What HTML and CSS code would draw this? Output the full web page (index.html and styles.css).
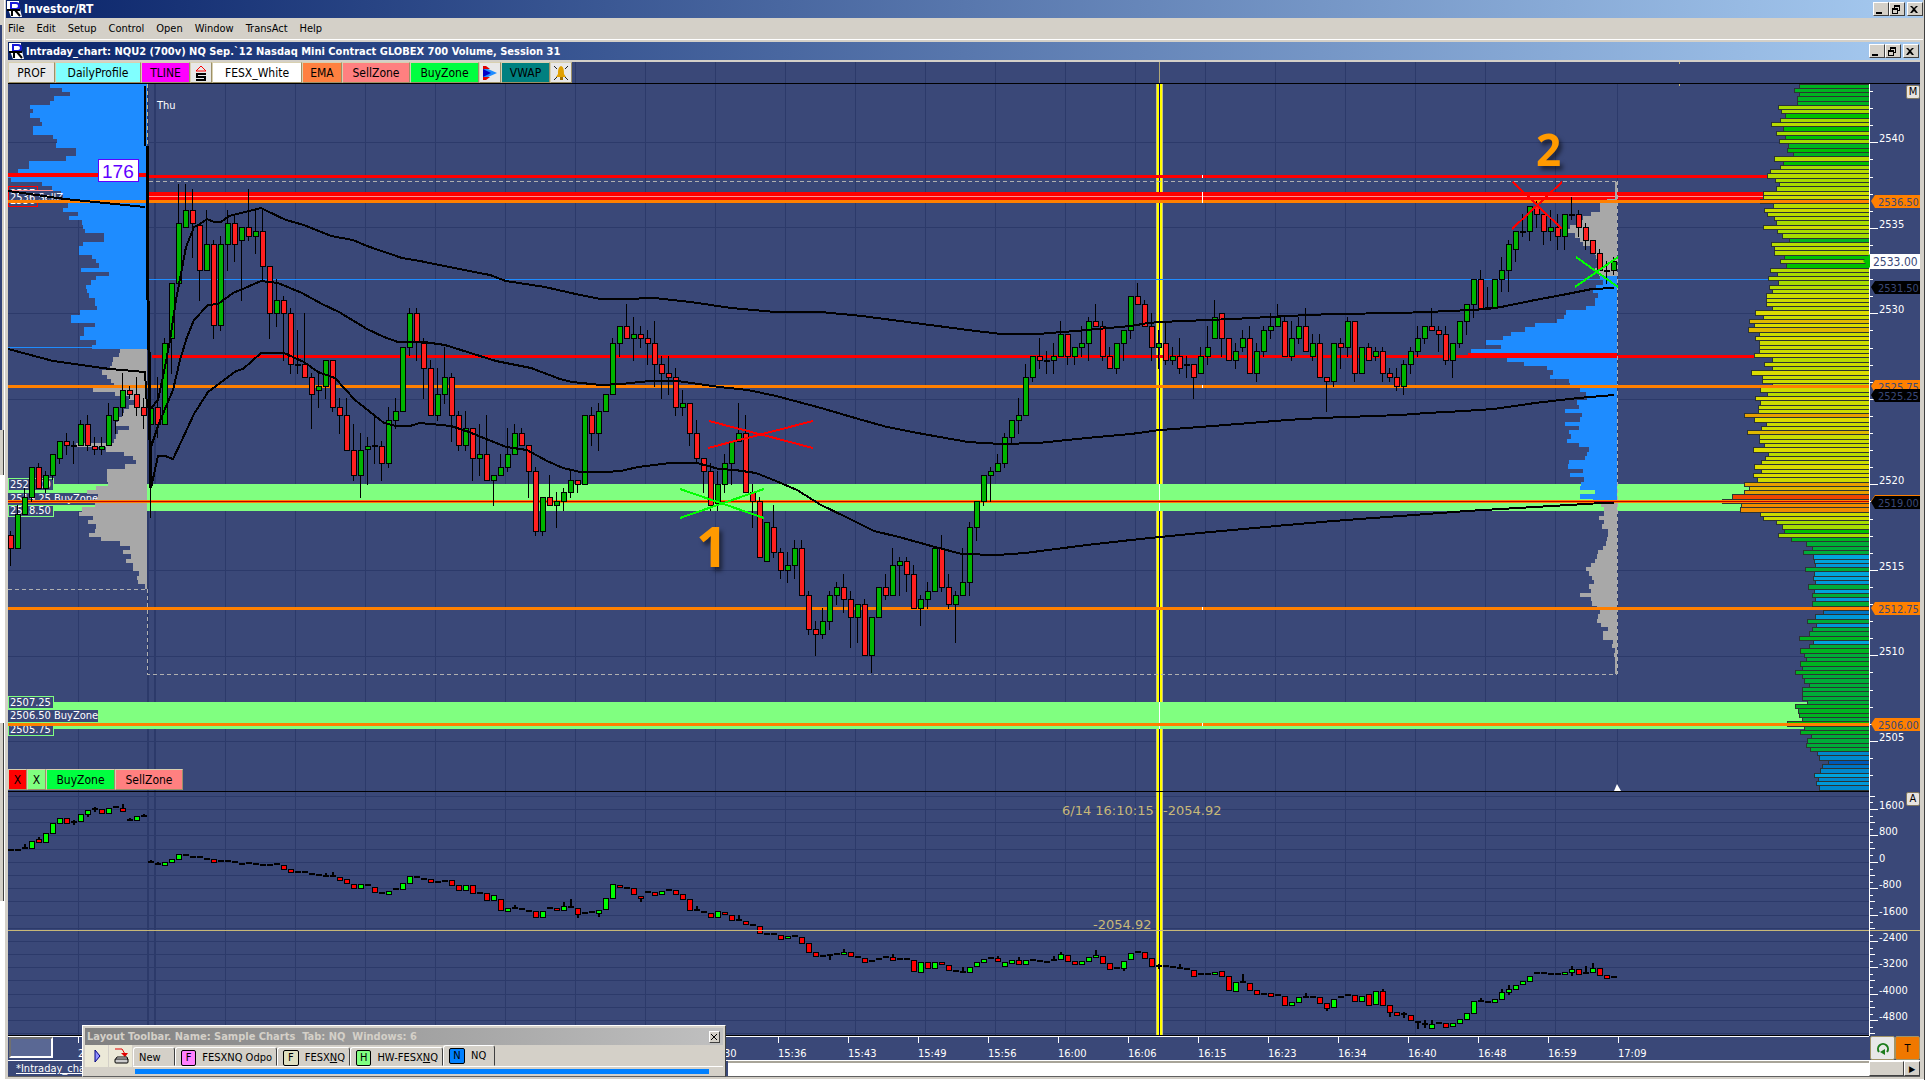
FILE: index.html
```html
<!DOCTYPE html>
<html lang="en">
<head>
    <meta charset="UTF-8">
    <meta name="viewport" content="width=device-width, initial-scale=1.0">
    <title>Investor/RT</title>
    <link rel="stylesheet" href="styles.css">
</head>
<body>
    <div class="desktop">
        <div class="behind">
            <div class="behind-top"></div>
            <div class="behind-chart"></div>
            <div class="behind-bar"></div>
            <div class="behind-blank"></div>
            <div class="behind-bar behind-bar-low"></div>
        </div>

        <div class="app">
            <header class="titlebar">
                <svg class="logo" viewBox="0 0 16 16"><rect x="1" width="12" height="9" fill="#fff"/><path d="M2 8h12l2 8H5z" fill="#fff"/><path d="M4 2h6q3 0 3 3t-3 3H6M5 2v7" fill="none" stroke="#1818d8" stroke-width="2"/><path d="M1 9h13M6 9v6M9 9l5 6" fill="none" stroke="#000" stroke-width="2"/></svg>
                <h1>Investor/RT</h1>
                <div class="win-buttons">
                    <button type="button" aria-label="Minimize"><svg viewBox="0 0 12 11"><path d="M2 8h6v2H2z"/></svg></button>
                    <button type="button" aria-label="Restore"><svg viewBox="0 0 12 11"><path d="M4 1h6v6H8V6h1V3H5v1H4zM2 4h6v6H2zM3 6v3h4V6z" fill-rule="evenodd"/></svg></button>
                    <button type="button" aria-label="Close" class="close"><svg viewBox="0 0 12 11"><path d="M2 2h2l2 2 2-2h2L7 5l3 4H8L6 7 4 9H2l3-4z"/></svg></button>
                </div>
            </header>

            <nav class="menubar">
                <button type="button">File</button>
                <button type="button">Edit</button>
                <button type="button">Setup</button>
                <button type="button">Control</button>
                <button type="button">Open</button>
                <button type="button">Window</button>
                <button type="button">TransAct</button>
                <button type="button">Help</button>
            </nav>

            <main class="mdi">
                <div class="titlebar titlebar-inner">
                    <svg class="logo" viewBox="0 0 16 16"><rect x="1" width="12" height="9" fill="#fff"/><path d="M2 8h12l2 8H5z" fill="#fff"/><path d="M4 2h6q3 0 3 3t-3 3H6M5 2v7" fill="none" stroke="#1818d8" stroke-width="2"/><path d="M1 9h13M6 9v6M9 9l5 6" fill="none" stroke="#000" stroke-width="2"/></svg>
                    <h2>Intraday_chart: NQU2 (700v) NQ Sep.`12 Nasdaq Mini Contract GLOBEX 700 Volume, Session 31</h2>
                    <div class="win-buttons">
                        <button type="button" aria-label="Minimize chart"><svg viewBox="0 0 12 11"><path d="M2 8h6v2H2z"/></svg></button>
                        <button type="button" aria-label="Restore chart"><svg viewBox="0 0 12 11"><path d="M4 1h6v6H8V6h1V3H5v1H4zM2 4h6v6H2zM3 6v3h4V6z" fill-rule="evenodd"/></svg></button>
                        <button type="button" aria-label="Close chart" class="close"><svg viewBox="0 0 12 11"><path d="M2 2h2l2 2 2-2h2L7 5l3 4H8L6 7 4 9H2l3-4z"/></svg></button>
                    </div>
                </div>

                <div class="chart-wrap">
                    <svg id="chart" viewBox="8 62 1912 998"></svg>

                    <div class="tools">
                        <button type="button" class="tool w-prof">PROF</button>
                        <button type="button" class="tool w-daily cyan">DailyProfile</button>
                        <button type="button" class="tool w-tline magenta">TLINE</button>
                        <button type="button" class="tool w-icon" aria-label="Session"><svg viewBox="0 0 16 18"><path d="M3 7h10L8 2z" fill="none" stroke="#f00"/><path d="M13 10H4v3h8v3H3" fill="none" stroke="#000" stroke-width="2"/></svg></button>
                        <button type="button" class="tool w-fesx white">FESX_White</button>
                        <button type="button" class="tool w-ema orange">EMA</button>
                        <button type="button" class="tool w-sell pink">SellZone</button>
                        <button type="button" class="tool w-buy green">BuyZone</button>
                        <button type="button" class="tool w-icon" aria-label="Play"><svg viewBox="0 0 16 18"><path d="M1 2h3l4 3H1zM1 16h3l4-3H1z" fill="#e00000"/><path d="M1 5h5l9 4-9 4H1z" fill="#1e8cff"/><path d="M1 5l8 4-8 4z" fill="#0000c8"/></svg></button>
                        <button type="button" class="tool w-tline teal">VWAP</button>
                        <button type="button" class="tool w-icon" aria-label="Alarm"><svg viewBox="0 0 16 18"><path d="M1 2l3 3M15 2l-3 3M1 16l3-3M15 16l-3-3" stroke="#222"/><path d="M8 2c3 1 3 5 3 8l2 3H3l2-3c0-3 0-7 3-8z" fill="#e0a000"/><path d="M7 13h3v3H7z" fill="#a07000"/></svg></button>
                    </div>

                    <div class="zones">
                        <button type="button" class="tool w-x red">X</button>
                        <button type="button" class="tool w-x lime">X</button>
                        <button type="button" class="tool w-buy green">BuyZone</button>
                        <button type="button" class="tool w-sell pink">SellZone</button>
                    </div>

                    <button type="button" class="pane-btn pane-m">M</button>
                    <button type="button" class="pane-btn pane-a">A</button>
                    <div class="time-box"></div>
                    <div class="corner">
                        <button type="button" class="corner-btn" aria-label="Refresh"><svg viewBox="0 0 16 16"><path d="M4 12A5 5 0 1 1 12 12" fill="none" stroke="#1c7c1c" stroke-width="2"/><path d="M5 12l5-3v6z" fill="#1c7c1c"/></svg></button>
                        <button type="button" class="corner-btn amber">T</button>
                    </div>
                </div>

                <div class="bottom-row">
                    <a class="sheet" href="#">*Intraday_chart: NQU2</a>
                    <div class="track"></div>
                    <div class="thumb"></div>
                    <button type="button" class="scroll-right" aria-label="Scroll right">&#9654;</button>
                </div>
            </main>
        </div>

        <section class="layout-bar">
            <div class="layout-title">
                <h3>Layout Toolbar. Name: Sample Charts&nbsp; Tab: NQ&nbsp; Windows: 6</h3>
                <button type="button" class="layout-close" aria-label="Close toolbar"><svg viewBox="0 0 8 8"><path d="M1 1l6 6M7 1L1 7" stroke="#000"/></svg></button>
            </div>
            <div class="layout-body">
                <button type="button" class="mini" aria-label="Run"><svg viewBox="0 0 20 20"><path d="M8 4l5 6-5 6z" fill="#9090ff" stroke="#000080"/></svg></button>
                <button type="button" class="mini" aria-label="Save"><svg viewBox="0 0 20 20"><path d="M4 3h7l3 5" fill="none" stroke="#e00000"/><path d="M10 7h7l-3 4z" fill="#e00000"/><path d="M6 11h10l1 3H4z" fill="#fff" stroke="#000"/><rect x="4" y="13" width="13" height="4" rx="1" fill="#ccc" stroke="#000"/></svg></button>
                <div class="tabs">
                    <button type="button" class="tab w-new">New</button>
                    <button type="button" class="tab w-odpo"><i class="key violet">F</i>FESXNQ Odpo</button>
                    <button type="button" class="tab w-fnq"><i class="key sand">F</i><span>FESX<u>N</u>Q</span></button>
                    <button type="button" class="tab w-hw"><i class="key lime">H</i><span>HW-FESX<u>N</u>Q</span></button>
                    <button type="button" class="tab w-nq active"><i class="key blue">N</i>NQ</button>
                </div>
            </div>
            <div class="layout-strip"></div>
        </section>
        <div class="edge"></div>
    </div>

    <script src="chart.js"></script>
</body>
</html>
```
FILE: styles.css
```css
* {
    box-sizing: border-box;
}

body {
    margin: 0;
    background: #fff;
    font-family: "DejaVu Sans Condensed", "Liberation Sans", sans-serif;
    font-size: 11px;
    color: #000;
    overflow: hidden;
}

button {
    font-family: inherit;
    font-size: inherit;
    color: inherit;
    padding: 0;
    border: none;
    background: none;
}

h1, h2, h3 {
    margin: 0;
    font-size: 11px;
    font-weight: bold;
    white-space: nowrap;
}

h1 {
    font-size: 12px;
}

.desktop {
    position: relative;
    display: grid;
    grid-template-columns: 4px 1fr 4px;
    min-height: 100vh;
}

/* slice of the window that lies behind */
.behind {
    display: flex;
    flex-direction: column;
}

.behind-top { height: 25px; background: #d4d0c8; }
.behind-chart { height: 405px; background: #334378; border-right: 2px solid #d4d0c8; }
.behind-bar { height: 45px; background: #d4d0c8; border-right: 1px solid #404040; }
.behind-blank { height: 248px; background: #fff; }
.behind-bar-low { height: 178px; }

.edge {
    background: #fff;
    border-left: 1px solid #404040;
}

.app {
    display: flex;
    flex-direction: column;
    min-width: 0;
    background: #d4d0c8;
    border-left: 1px solid #fff;
    padding: 0 1px;
    height: 1079px;
}

.titlebar {
    display: flex;
    align-items: center;
    gap: 2px;
    height: 18px;
    background: linear-gradient(to right, #0a246a, #a6caf0);
    color: #fff;
}

.logo {
    width: 16px;
    height: 16px;
    flex: none;
}

.win-buttons {
    display: flex;
    margin-left: auto;
}

.win-buttons button {
    width: 16px;
    height: 14px;
    background: #d4d0c8;
    border: 1px solid;
    border-color: #fff #404040 #404040 #fff;
}

.win-buttons svg {
    display: block;
    width: 12px;
    height: 11px;
}

.win-buttons .close {
    margin-left: 2px;
}

.menubar {
    display: flex;
    gap: 12px;
    height: 21px;
    padding: 0 2px;
}

.mdi {
    border-top: 1px solid #fff;
    padding: 2px 3px 0 2px;
}

.titlebar-inner {
    margin-bottom: 2px;
    padding-right: 1px;
}

.chart-wrap {
    position: relative;
}

#chart {
    display: block;
    width: 100%;
    height: auto;
    background: #3a4878;
}

#chart text {
    white-space: pre;
}

.label { font-size: 11px; fill: #fff; }
.tag { font-size: 11px; fill: #3a4878; }
.tag-big { font-size: 12px; }
.label-axis { font-size: 11px; fill: #fff; }
.label-cursor { font-family: "DejaVu Sans", sans-serif; font-size: 13px; fill: #c8b878; }
.label-count { font-family: "Liberation Sans", sans-serif; font-size: 19px; fill: #6000ff; }
.mark { font-family: "Noto Sans", sans-serif; font-weight: bold; fill: #ff9a00; filter: drop-shadow(3px 4px 2px rgba(0, 0, 0, 0.5)); }
.mark-one { font-size: 56px; }
.mark-two { font-size: 44px; }

.tools, .zones {
    position: absolute;
    left: 0;
    display: flex;
}

.tools { top: 0; }
.zones { top: 707px; }

.tool {
    height: 21px;
    font-family: "DejaVu Sans Condensed", sans-serif;
    font-size: 12px;
    background: #e8e8e8;
    border: 1px solid;
    border-color: #d8d0b0 #9c9068 #9c9068 #d8d0b0;
    display: flex;
    align-items: center;
    justify-content: center;
}

.tool svg { width: 16px; height: 18px; }

.w-prof { width: 47px; }
.w-daily { width: 86px; }
.w-tline { width: 49px; }
.w-icon { width: 22px; }
.w-fesx { width: 90px; }
.w-ema { width: 40px; }
.w-sell { width: 68px; }
.w-buy { width: 69px; }
.w-x { width: 19px; }

.cyan { background: #80ffff; }
.magenta { background: #ff00ff; }
.white { background: #fff; }
.orange { background: #ff8040; }
.pink { background: #ff8080; }
.green { background: #00ff40; }
.teal { background: #008080; }
.red { background: #ff0000; }
.lime { background: #80ff80; }
.violet { background: #ff80ff; }
.sand { background: #e0e0c0; }
.blue { background: #0080ff; }
.amber { background: #f07800; }

.pane-btn {
    position: absolute;
    right: 0;
    width: 14px;
    height: 14px;
    background: #e8e4e0;
    border: 1px solid #807860;
    border-radius: 2px;
    line-height: 12px;
}

.pane-m { top: 23px; }
.pane-a { top: 730px; }

.time-box {
    position: absolute;
    left: 1px;
    bottom: 2px;
    width: 44px;
    height: 21px;
    background: #5a6894;
    border: 2px solid;
    border-color: #707070 #fff #fff #707070;
}

.corner {
    position: absolute;
    right: 0;
    bottom: 0;
    display: flex;
}

.corner-btn {
    width: 25px;
    height: 24px;
    background-color: #e8e8e8;
    border: 1px solid #a09468;
    border-radius: 2px;
}

.corner-btn svg { width: 16px; height: 16px; display: block; margin: auto; }
.corner-btn.amber { background-color: #f07800; }

.bottom-row {
    display: flex;
    height: 17px;
    border-top: 1px solid #fff;
    border-bottom: 1px solid #606060;
}

.sheet {
    width: 720px;
    padding-left: 8px;
    background: #3a4878;
    color: #fff;
    line-height: 15px;
}

.track {
    flex: 1;
    background: #fff;
    border-top: 2px solid #a8a498;
}

.thumb, .scroll-right {
    background: #d4d0c8;
    border: 1px solid;
    border-color: #fff #404040 #404040 #fff;
}

.thumb { width: 35px; }
.scroll-right { width: 16px; font-size: 9px; line-height: 12px; }

/* floating toolbar */
.layout-bar {
    position: absolute;
    left: 82px;
    bottom: 3px;
    width: 644px;
    height: 52px;
    background: #d4d0c8;
    border: 1px solid;
    border-color: #fff #404040 #606060 #fff;
    padding: 2px;
}

.layout-title {
    display: flex;
    align-items: center;
    justify-content: space-between;
    height: 17px;
    padding: 0 3px 0 2px;
    background: linear-gradient(to right, #808080, #c0c0c0);
    color: #d4d0c8;
}

.layout-close {
    width: 11px;
    height: 12px;
    background: #d4d0c8;
    border: 1px solid;
    border-color: #fff #404040 #404040 #fff;
}

.layout-close svg { display: block; width: 8px; height: 8px; }

.layout-body {
    display: flex;
    height: 22px;
}

.mini { width: 23px; background: #ece9d8; margin-right: 1px; }
.mini svg { display: block; width: 20px; height: 20px; margin: auto; }

.tabs {
    display: flex;
    flex: 1;
    align-items: flex-end;
    border-bottom: 1px solid #fff;
}

.tab {
    display: flex;
    align-items: center;
    gap: 6px;
    height: 19px;
    padding: 2px 4px 0 5px;
    border: 1px solid;
    border-color: #fff #404040 transparent #fff;
    border-radius: 3px 3px 0 0;
    font-size: 11px;
    white-space: nowrap;
}

.tab.active { height: 21px; padding-top: 0; }

.w-new { width: 42px; }
.w-odpo { width: 102px; }
.w-fnq { width: 73px; }
.w-hw { width: 93px; }
.w-nq { width: 52px; }

.key {
    width: 16px;
    height: 16px;
    border: 1px solid #000;
    border-radius: 2px;
    font-style: normal;
    text-align: center;
    line-height: 14px;
}

.layout-strip {
    height: 5px;
    margin: 2px 14px 0 50px;
    background: #0080ff;
}
```
FILE: chart.js
```javascript
const svg = document.getElementById("chart");
const NS = "http://www.w3.org/2000/svg";

function add(name, attrs, text) {
    const el = document.createElementNS(NS, name);
    for (const key in attrs) el.setAttribute(key, attrs[key]);
    if (text !== undefined) el.textContent = text;
    svg.appendChild(el);
    return el;
}

function box(x, y, w, h, fill) {
    add("rect", { x: x, y: y, width: w, height: h, fill: fill, "shape-rendering": "crispEdges" });
}

function line(points, color, width, dash) {
    const attrs = { points: points, fill: "none", stroke: color, "stroke-width": width, "shape-rendering": "crispEdges" };
    if (dash) attrs["stroke-dasharray"] = dash;
    add("polyline", attrs);
}

function label(x, y, text, cls) {
    add("text", { x: x, y: y, class: cls }, text);
}

const GRID = "#2c3a6a";
const ORANGE = "#ff8000";
const ROW = 4.28;

// g/r/d (up, down, doji), top, bottom, high, low
const candles = `r 535 548 531 565|g 514 548 505 548|g 497 514 488 514|g 467 497 467 501|r 467 488 463 488|g 475 488 471 492|g 454 475 454 479|g 441 458 441 463|r 441 445 433 454|d 446 446 441 463
g 424 445 420 445|r 424 445 415 450|r 446 449 437 454|g 446 449 437 454|g 415 445 403 445|g 407 420 407 433|g 390 407 373 415|r 390 394 386 398|r 394 407 377 415|r 407 415 398 428
g 408 424 408 424|r 407 424 377 437|g 343 424 338 424|g 283 338 283 373|g 223 283 184 283|g 210 227 184 227|r 210 223 189 257|r 225 270 225 300|g 244 270 210 270|r 244 325 240 338
g 244 325 236 330|g 223 244 210 270|r 223 244 215 261|g 227 240 227 300|r 227 236 189 240|g 231 236 210 253|r 231 266 210 279|r 266 313 266 338|g 300 313 279 326|r 300 313 296 360
r 313 364 308 373|d 365 365 330 373|r 364 377 313 377|r 377 394 373 428|g 386 390 373 407|g 360 386 360 398|r 360 407 360 411|r 407 415 398 433|r 415 450 398 450|r 450 475 424 480
g 450 475 433 497|g 446 449 437 484|d 446 446 415 463|r 446 463 441 480|g 420 463 407 467|g 411 420 398 428|g 347 411 347 411|g 313 347 308 355|r 313 342 308 360|r 343 368 338 398
r 368 415 360 415|g 394 415 368 420|g 377 394 347 403|r 377 415 373 441|r 415 445 411 450|g 428 445 411 450|r 428 458 428 480|g 454 458 424 475|r 454 480 415 480|g 475 480 475 505
g 467 475 454 475|g 454 467 428 471|g 433 454 424 454|r 433 445 428 445|r 445 471 445 497|r 471 531 467 535|g 497 531 497 535|r 497 505 475 505|g 501 505 492 527|g 492 501 488 510
g 480 492 471 497|r 480 484 480 492|g 415 484 415 484|r 415 433 407 445|g 411 433 403 450|g 394 411 394 411|g 343 394 338 394|g 326 343 326 356|r 326 338 304 338|g 334 338 317 360
r 334 338 326 347|r 338 343 330 364|r 343 364 321 386|r 364 373 356 398|r 373 377 356 394|r 377 407 368 415|g 403 407 390 415|r 403 433 403 445|r 433 458 420 462|r 458 471 458 492
r 471 505 463 510|g 484 503 471 510|g 463 484 454 492|g 441 463 441 484|g 433 441 403 441|r 433 492 415 492|r 492 501 484 527|r 501 557 497 557|g 522 561 522 561|r 527 552 505 557
r 552 570 548 578|g 565 570 552 582|g 548 565 540 578|r 548 595 540 595|r 595 629 591 634|r 629 634 621 655|g 621 634 608 638|g 595 621 591 629|g 587 595 582 604|r 587 599 574 612
r 599 617 591 647|g 604 617 604 642|r 604 655 599 655|g 617 655 617 672|g 587 617 587 617|r 587 595 574 599|g 565 595 548 595|g 561 565 557 595|r 561 574 557 591|r 574 608 565 608
g 599 608 595 625|g 591 599 582 608|g 548 591 548 591|r 548 587 535 591|r 587 604 574 608|g 595 604 591 642|g 582 595 548 595|g 527 582 522 595|g 501 527 501 540|g 475 501 475 505
g 471 475 467 501|g 463 471 454 471|g 437 463 433 467|g 420 437 420 443|g 415 420 398 433|g 377 415 364 415|g 356 377 356 381|r 356 360 338 368|d 361 361 351 373|g 356 360 343 373
g 334 356 321 356|r 334 356 334 364|g 347 356 347 364|g 343 347 326 356|g 321 343 317 360|r 321 326 304 326|r 326 356 321 360|r 356 368 347 368|g 343 368 343 373|g 330 343 330 360
g 296 330 296 338|r 296 304 283 304|r 304 326 300 326|r 326 347 313 360|g 343 347 330 368|r 343 360 323 364|g 356 360 347 364|r 356 368 338 373|d 365 365 356 377|r 364 377 364 398
g 356 373 347 373|g 347 356 326 364|g 317 338 300 338|r 313 338 313 356|r 338 360 338 360|g 351 360 343 368|g 338 347 330 351|r 338 373 326 373|g 351 373 343 381|g 330 351 326 356
g 326 330 313 338|g 317 326 304 326|r 321 356 317 356|g 338 356 321 360|g 326 338 317 343|r 326 351 308 351|g 343 356 334 360|r 343 377 334 377|r 377 381 377 411|g 343 381 343 386
r 343 347 338 368|g 321 347 317 356|r 321 373 321 381|g 347 373 347 373|r 347 360 343 360|g 351 356 347 360|r 351 373 347 381|r 373 377 368 381|r 377 386 368 390|g 364 386 360 394
g 351 364 347 373|g 338 351 326 356|g 326 338 326 343|r 326 330 308 330|r 330 334 326 351|r 334 360 326 364|g 343 360 343 377|g 321 343 321 347|g 304 321 304 334|g 279 304 279 317
r 279 308 270 308|d 308 308 287 308|g 279 308 279 308|g 270 279 257 291|g 244 270 240 291|g 231 249 231 261|d 232 232 214 236|g 206 231 206 240|r 206 214 201 227|r 214 231 214 244
g 227 231 210 240|r 227 236 214 249|g 214 236 214 249|d 215 215 197 219|r 214 227 210 236|r 227 240 223 249|r 240 253 240 253|r 253 270 249 270|d 271 271 261 283|g 261 270 257 274`;

// same format, second pane; high/low left out when there is no wick
const delta = `d 850 850|d 850 850|d 848 848 844 848|g 841 848|r 839 842 837 842|g 833 842|g 823 833|g 818 823|r 818 823|d 822 822 820 824
g 814 821|g 810 814 810 816|d 809 809 807 811|r 809 813|g 808 813|d 807 807|r 808 811 804 811|d 820 820 818 820|g 816 820|d 816 816 814 816
d 862 862 860 862|d 864 864 862 864|g 862 865|g 859 862|g 854 859|d 855 855|d 857 857|d 857 857|d 859 859|r 859 862
d 861 861|d 861 861|d 862 862|d 864 864|d 863 863|d 864 864|d 865 865|d 865 865|d 864 864|r 865 869
r 869 872|d 872 872|d 872 872|d 874 874|d 875 875|d 876 876 873 876|d 876 876 872 876|r 877 880|r 879 883|r 884 888
g 884 888|d 885 885|r 887 892|d 893 893|g 891 894|d 889 889|g 883 889|g 876 883|d 877 877|d 879 879
r 879 882|d 882 882|d 881 881|r 880 885|r 885 890|g 885 890|r 885 893|d 893 893|r 893 900|g 895 900
r 899 910|g 908 911|d 908 908 905 908|d 909 909|d 911 911|r 911 917|g 911 917|d 908 908|r 908 910|g 906 910 902 910
d 907 907 899 907|r 908 914 908 917|d 913 913|d 912 912|g 910 913 910 916|g 898 909|g 884 898|r 885 887|d 888 888|r 888 894
r 896 898 896 901|d 892 892|r 892 895|g 891 894|d 890 890|r 890 894|r 894 899|r 899 910|d 910 910 906 910|d 912 912
r 913 917|g 911 917|r 912 914|r 915 920|d 920 920 915 920|r 921 924|d 925 925|r 926 933|d 934 934|d 934 934
r 935 939|g 936 938|d 936 936|r 937 943|r 943 952|r 952 956|d 956 956|d 955 955 955 959|d 954 954|g 952 954 949 954
r 952 956|d 957 957|r 958 962|d 961 961|d 959 959|d 957 957|r 957 960 954 960|d 959 959|d 959 959|r 960 971
g 962 972|r 962 968|g 962 968|r 962 964|r 965 970|d 971 971|d 972 972 967 972|g 967 972|g 962 966|g 959 962
d 958 958|r 958 961 956 961|g 962 966|g 960 963|r 960 964 957 964|g 960 964|d 960 960|d 961 961|d 962 962|d 960 960 956 960
g 954 959 952 959|r 955 961|r 961 964|g 961 964|g 957 961|g 955 957 950 957|r 956 963|r 963 969|d 968 968|g 961 968 961 970
g 953 959|d 952 952|r 952 958|r 958 966|d 966 966 964 968|d 966 966|d 967 967|d 968 968 964 968|d 969 969|r 970 976
d 974 974|d 974 974|g 972 974|r 971 976|r 976 990|g 982 991|d 982 982 974 982|r 983 990|r 990 994|d 994 994
r 993 996|d 995 995|r 996 1005|g 1002 1005|g 997 1002|d 997 997 993 997|d 997 997|r 997 1003|r 1003 1008 1003 1010|g 999 1007
d 997 997|d 995 995|r 995 1001|g 996 1001|r 994 1005|g 991 1004|r 991 1005 989 1005|r 1005 1012 1005 1016|r 1012 1015|d 1014 1014 1012 1017
r 1015 1020|d 1022 1022 1022 1028|d 1024 1024 1020 1027|g 1024 1028 1020 1028|d 1023 1023|r 1023 1027|g 1023 1026|g 1019 1023|g 1013 1019|g 1001 1013
d 1001 1001 998 1001|d 1002 1002|g 999 1002|g 992 999 989 999|g 989 992 985 994|g 985 989|g 981 984|g 976 981|d 973 973|d 973 973
d 974 974|d 974 974|g 972 974|g 969 972 966 975|r 969 974|d 973 973 966 973|g 968 972 963 972|r 968 975|r 975 978|d 977 977`;

function drawCandles(data, up, down, wick) {
    data.split(/[|\n]/).forEach((row, i) => {
        const [kind, a, b, hi, lo] = row.split(" ");
        const top = +a, bottom = +b, x = 8 + i * 7;
        if (hi) box(x + 2, +hi, wick, lo - hi + 1, "#000");
        if (kind === "d") {
            box(x, top - 1, 6, 2, "#000");
            return;
        }
        box(x, top, 6, bottom - top + 1, "#000");
        box(x + 1, top + 1, 4, Math.max(bottom - top - 1, 1), kind === "g" ? up : down);
    });
}

// left edge of every row, quarter point each
const volume = [1186,1171,1184,1178,1178,1124,1132,1144,1130,1103,1138,1118,1144,1127,1153,1150,1168,1112,1138,1130,1100,1091,1115,1127,1116,1079,1079,1070,1109,1082,1091,1112,1118,1079,1121,1135,1156,1103,1110,1112,1141,1130,1147,1100,1121,1094,1124,1097,1106,1088,1088,1088,1106,1055,1077,1037,1052,1034,1067,1055,1067,1065,1065,1052,1104,1082,1104,1043,
    1076,1076,1106,1070,1091,1055,1070,1064,1064,1023,1052,1088,1073,1031,1067,1067,1082,1049,1094,1085,1073,1052,1073,1049,1061,1023,1037,1023,987,957,1014,1011,1070,1079,1118,1135,1141,1124,1162,1207,1225,1198,1228,1230,1233,1204,1230,1227,1233,1213,1230,1225,1233,1225,1258,1257,1233,1210,1236,1225,1216,1186,1227,1216,1189,1201,1207,1189,1195,1174,1195,1201,1216,1195,1195,1195,1210,1174,1183,1186,1195,1150,1201,1189,1222,1210,1207,1219,1239,1245,1272,1254,1248,1230,1242,1236,1245,1252];

const heat = [[960, "#e01010"], [990, "#f04400"], [1016, "#f08c00"], [1030, "#e8a000"], [1037, "#e0b800"], [1058, "#dcdc00"], [1090, "#ccdc00"], [1112, "#b8dc00"], [1136, "#a8dc00"], [1150, "#00c000"], [1190, "#00b420"], [1226, "#00ac38"], [1232, "#00a4dc"], [1238, "#0098d8"], [1250, "#0088cc"], [1260, "#0074c4"], [2000, "#0058b8"]];

function drawVolume() {
    volume.forEach((v, k) => {
        const x = Math.round(1400 + v / 2.97);
        const y = Math.round(83.5 + k * ROW);
        const next = Math.min(Math.round(83.5 + (k + 1) * ROW), 791);
        box(x, y, 1869 - x, next - y + 1, "#2c3434");
        box(x + 1, y + 1, 1868 - x, next - y - 1, heat.find(h => v <= h[0])[1]);
    });
}

function drawProfile(edges, first, originX, scale, right, colorAt) {
    edges.forEach((v, n) => {
        const k = first + n;
        const x = Math.round(originX + v / scale);
        const y = Math.round(83.5 + k * ROW);
        box(x, y, right - x, Math.round(83.5 + (k + 1) * ROW) - y, colorAt(k));
    });
}

const session = [638,638,638,638,615,594,594,567,543,540,505,499,520,535,543,565,580,583,590,585,580,590,594,602,583,573,588,579,579,552,493,487,466,401,371,330,306,255,300,211,202,318,368,437,454,
    445,502,505,535,552,555,526,532,490,540,535,490,532,502,508,496,532,561,555,549,502,499,543,505,546,538,535,579,535,573,597,606,606,591,606,600,618,618,615,612,603,588,585,579,567,552,561,570,576,561,567,535,567,570,585,594,588,585,597,618,603,603,633,630,638,636,638,638,638,638];
const previous = [122,152,171,133,122,73,82,73,98,103,81,81,130,140,137,186,186,162,71,71,44,20,26,103,128,150,155,160,167,155,190,169,201,203,208,255,255,203,194,194,225,235,243,198,267,235,223,211,213,218,232,232,238,196,174,174,233,206,206,196,235,225,293,291,278,
    275,270,250,262,272,280,228,282,316,330,316,305,300,288,284,316,288,284,280,186,260,303,326,333,306,262,262,262,264,235,213,240,232,232,202,194,228,216,235,232,218,247,294,318,301,322,309,326,326,341,336,338,355];

// grid
for (let x = 225; x < 1600; x += 70) box(x, 62, 1, 974, GRID);
box(78, 62, 1, 974, GRID);
box(1617, 84, 1, 707, GRID);
box(147, 62, 2, 974, GRID);
box(154, 62, 2, 974, GRID);
[142, 227, 313, 399, 570, 656, 741].forEach(y => box(8, y, 1861, 1, GRID));
[796, 809, 822, 835, 849, 862, 875, 888, 901, 915, 928, 941, 954, 967, 980, 994, 1007, 1020, 1033].forEach(y => box(8, y, 1861, 1, GRID));

// cursor column
box(1156, 84, 7, 951, "#c8c080");
box(1157, 84, 5, 951, "#ffff00");
box(1159, 84, 1, 951, "#000080");
box(1159, 62, 1, 22, "#b0a878");

// zones
box(8, 484, 1861, 27, "#80ff80");
box(8, 702, 1861, 27, "#80ff80");
box(1159, 484, 1, 27, "#fff");
box(1159, 702, 1, 27, "#fff");

function zoneLabel(y, h, w, text, color) {
    box(8, y, w, h, color);
    box(9, y + 1, w - 2, h - 2, "#3a4878");
    label(10, y + h - 3, text, "label");
}
zoneLabel(478, 13, 46, "2520.00", "#80ff80");
zoneLabel(493, 12, 90, "2519.25 BuyZone", "#3a4878");
zoneLabel(505, 12, 46, "2518.50", "#80ff80");
zoneLabel(696, 13, 46, "2507.25", "#80ff80");
zoneLabel(710, 12, 90, "2506.50 BuyZone", "#3a4878");
zoneLabel(723, 13, 46, "2505.75", "#80ff80");

// levels under the profiles
drawProfile(previous, 0, 0, 2.45, 147, k => k < 62 ? "#1e8cff" : "#a8a8a8");
zoneLabel(186, 14, 30, "2537", "#ff0000");
zoneLabel(194, 13, 30, "2536", "#ff0000");
box(9, 191, 52, 11, "#3a4878");
box(8, 190, 45, 1, "#ff9090");
label(10, 201, "2536 SellZ", "label");
box(8, 173, 139, 4, "#ff0000");
box(148, 175, 1721, 3, "#ff0000");
box(148, 192, 1721, 8, "#ff0000");
box(148, 196, 1721, 1, "#ff9090");
line("149,181.5 1617,181.5", "#b0b0b0", 1, "4 3");
box(8, 347, 84, 1, "#1e8cff");
box(149, 279, 1720, 1, "#1e8cff");
box(152, 355, 1717, 3, "#ff0000");
line("8,589.5 147,589.5", "#b0b0b0", 1, "4 3");
line("147.5,589 147.5,674.5 1617,674.5", "#b0b0b0", 1, "4 3");
line("147.5,84 147.5,340", "#c0b890", 1, "4 3");

drawProfile(session, 23, 1400, 2.97, 1617, k => k < 45 ? "#a8a8a8" : k === 63 ? "#ff0000" : k < 98 ? "#1e8cff" : "#a8a8a8");
box(1468, 353, 149, 5, "#ff0000");
line("1617.5,181 1617.5,674", "#b0b0b0", 1, "4 3");
drawVolume();

[[200, 3], [385, 3], [500, 3], [607, 3], [723, 3]].forEach(l => box(8, l[0], 1861, l[1], ORANGE));
box(8, 501, 1861, 1, "#c00000");

drawCandles(candles, "#00b400", "#ff2020", 1);
drawCandles(delta, "#00ff00", "#ff0000", 2);

// vwap and bands
line("8,191 65,199 145,207", "#000", 2);
line("8,349 53,361 110,369 145,372 147,408", "#000", 2);
line("145,86 145,146", "#000", 2);
line("147,146 147,240 148,300 149,350 150,440 151,488", "#000", 3);
line("150.5,450 150.5,518", "#000", 1);
line("151,408 158,400 165,367 170,340 176,300 186,247 194,227 200,224 207,219 214,222 221,222 229,216 245,212 261,208 267,211 286,220 304,225 331,236 353,240 367,246 402,258 420,261 459,269 490,275 506,281 545,287 580,295 601,299 625,299 654,298 691,302 731,308 776,312 821,312 862,316 915,323 968,330 1001,334 1038,334 1087,330 1131,326 1148,323 1160,322 1233,319 1287,316 1333,314 1400,313 1451,311 1488,309 1501,307 1535,300 1562,295 1592,289 1614,288", "#000", 2);
line("151,447 159,423 173,390 180,360 187,337 194,320 208,305 218,304 233,293 245,288 261,281 278,283 302,293 322,304 339,312 367,329 384,337 398,342 424,342 445,345 496,361 531,368 560,379 572,382 601,385 621,384 650,381 678,381 719,387 748,390 776,396 821,408 862,420 887,427 923,434 968,442 1001,444 1038,443 1087,438 1131,434 1160,430 1200,427 1250,423 1287,420 1320,418 1400,415 1427,413 1464,411 1494,409 1535,403 1578,398 1614,395", "#000", 2);
line("151,488 158,456 165,456 173,459 182,440 194,414 208,392 224,380 236,371 243,369 261,353 284,353 304,362 318,372 335,378 355,400 384,423 396,426 410,426 420,423 451,426 469,432 506,447 527,450 547,461 563,468 580,472 605,472 621,471 638,467 670,463 697,463 719,469 735,470 756,473 776,481 797,490 821,505 846,517 874,531 899,537 935,547 962,554 997,555 1025,553 1087,545 1131,540 1160,537 1200,533 1287,525 1333,521 1400,516 1467,511 1552,506 1602,503 1614,503", "#000", 2);

// trade marks
line("709,421 813,448", "#ff0000", 2);
line("708,448 813,421", "#ff0000", 2);
line("680,489 764,518", "#00ff00", 2);
line("680,518 764,489", "#00ff00", 2);
line("1513,182 1562,229", "#ff0000", 2);
line("1512,229 1562,182", "#ff0000", 2);
line("1576,257 1618,287", "#00ff00", 2);
line("1575,287 1618,257", "#00ff00", 2);
label(696, 567, "1", "mark mark-one");
label(1536, 166, "2", "mark mark-two");
label(157, 109, "Thu", "label");
box(98, 159, 41, 23, "#6000ff");
box(99, 160, 39, 21, "#fff");
label(102, 178, "176", "label-count");

// pane borders
box(8, 83, 1912, 1, "#000");
box(8, 791, 1861, 1, "#000");
box(8, 1035, 1861, 1, "#000");
box(8, 1036, 1861, 1, "#fff");
add("path", { d: "M1617 784l4 7h-7z", fill: "#fff" });
box(1679, 62, 1, 2, "#c8b878");
box(1679, 84, 1, 2, "#c8b878");
box(1202, 175, 1, 3, "#fff");
box(1202, 192, 1, 11, "#fff");
box(1202, 385, 1, 3, "#fff");
box(1202, 607, 1, 3, "#fff");
box(1202, 723, 1, 3, "#fff");

// cursor row
box(8, 930, 1912, 1, "#c8b878");
label(1062, 815, "6/14 16:10:15", "label-cursor");
label(1163, 815, "-2054.92", "label-cursor");
label(1093, 929, "-2054.92", "label-cursor");

// price axis
box(1869, 84, 1, 952, "#fff");
for (let n = 0; n <= 40; n++) {
    const y = Math.round(91 + n * 17.1);
    if (y < 790) box(1870, y, (n - 3) % 5 ? 3 : 8, 1, "#fff");
}
[2540, 2535, 2530, 2525, 2520, 2515, 2510, 2505].forEach((p, n) => {
    if (p !== 2525) label(1879, Math.round(142 + n * 85.5), p, "label-axis");
});
[1600, 800, 0, -800, -1600, -2400, -3200, -4000, -4800].forEach((v, n) => {
    const y = Math.round(809 + n * 26.4);
    box(1870, y, 8, 1, "#fff");
    box(1870, y + 13, 5, 1, "#fff");
    box(1870, y + 7, 3, 1, "#fff");
    box(1870, y + 20, 3, 1, "#fff");
    label(1879, y, v, "label-axis");
});
box(1870, 796, 5, 1, "#fff");
box(1870, 802, 3, 1, "#fff");

function tag(y, text, color) {
    add("path", { d: `M1871 ${y + 6}l4 -6h45v13h-45z`, fill: color });
    if (text) label(1878, y + 11, text, "tag");
}
tag(195, "2536.50", ORANGE);
tag(281, "2531.50", "#000");
tag(380, "2525.75", ORANGE);
tag(389, "2525.25", "#000");
tag(495, "", ORANGE);
tag(496, "2519.00", "#000");
tag(602, "2512.75", ORANGE);
tag(718, "2506.00", ORANGE);
add("path", { d: "M1863 261l7 -7v14z", fill: "#00c000" });
box(1870, 254, 50, 15, "#fff");
label(1873, 266, "2533.00", "tag tag-big");

// time axis
["21:58", "", "", "", "", "", "", "", "", "15:30", "15:36", "15:43", "15:49", "15:56", "16:00", "16:06", "16:15", "16:23", "16:34", "16:40", "16:48", "16:59", "17:09"].forEach((t, n) => {
    const x = 78 + n * 70;
    box(x, 1037, 1, 6, "#fff");
    if (t) label(x, 1057, t, "label-axis");
});
```
